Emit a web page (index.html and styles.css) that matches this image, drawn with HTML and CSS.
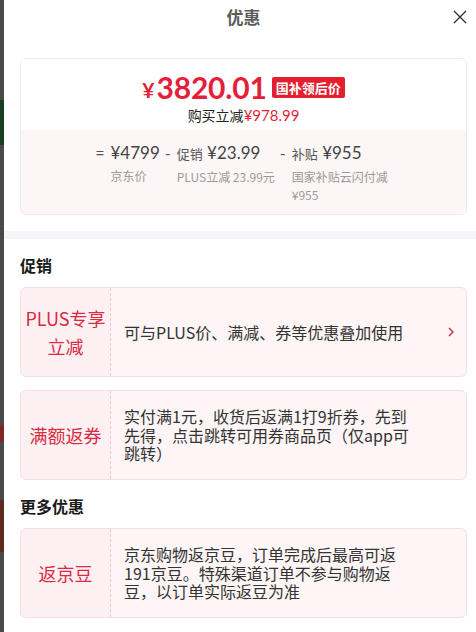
FILE: index.html
```html
<!DOCTYPE html>
<html lang="zh-CN">
<head>
<meta charset="utf-8">
<title>优惠</title>
<link rel="stylesheet" href="styles.css">
</head>
<body>
<div class="backdrop"></div>
<div class="panel">
  <header class="head">
    <span class="head-side"></span>
    <h1 class="title">优惠</h1>
    <span class="close" aria-label="关闭">
      <svg width="14" height="14" viewBox="0 0 14 14"><path d="M1 1 L13 13 M13 1 L1 13" stroke="#333" stroke-width="1.4" fill="none"/></svg>
    </span>
  </header>

  <section class="summary">
    <div class="summary-top">
      <div class="price-row">
        <span class="yen">¥</span><span class="price">3820.01</span><span class="badge">国补领后价</span>
      </div>
      <div class="save">购买立减<span class="save-num">¥978.99</span></div>
    </div>
    <div class="summary-bottom">
      <div class="calc">
        <span class="op">=</span>
        <div class="term">
          <div class="val">¥4799</div>
          <div class="lbl">京东价</div>
        </div>
      </div>
      <div class="calc">
        <span class="op">-</span>
        <div class="term">
          <div class="val"><span class="val-tag">促销</span> ¥23.99</div>
          <div class="lbl">PLUS立减 23.99元</div>
        </div>
      </div>
      <div class="calc">
        <span class="op">-</span>
        <div class="term term-narrow">
          <div class="val"><span class="val-tag">补贴</span> ¥955</div>
          <div class="lbl">国家补贴云闪付减 ¥955</div>
        </div>
      </div>
    </div>
  </section>

  <div class="band"></div>

  <section class="group">
    <h2 class="group-title">促销</h2>
    <div class="promo">
      <div class="promo-tag">PLUS专享<br>立减</div>
      <div class="promo-text">可与PLUS价、满减、券等优惠叠加使用</div>
      <div class="promo-more">
        <svg width="6" height="10" viewBox="0 0 6 10"><path d="M1 1 L5 5 L1 9" stroke="#c8334a" stroke-width="1.5" fill="none"/></svg>
      </div>
    </div>
    <div class="promo">
      <div class="promo-tag">满额返券</div>
      <div class="promo-text">实付满1元，收货后返满1打9折券，先到先得，点击跳转可用券商品页（仅app可跳转）</div>
      <div class="promo-more"></div>
    </div>
  </section>

  <section class="group">
    <h2 class="group-title">更多优惠</h2>
    <div class="promo">
      <div class="promo-tag">返京豆</div>
      <div class="promo-text">京东购物返京豆，订单完成后最高可返191京豆。特殊渠道订单不参与购物返豆，以订单实际返豆为准</div>
      <div class="promo-more"></div>
    </div>
  </section>
</div>
</body>
</html>
```

FILE: styles.css
```css
* {
  box-sizing: border-box;
}

html, body {
  margin: 0;
  padding: 0;
}

body {
  width: 476px;
  height: 632px;
  overflow: hidden;
  display: flex;
  background: #fff;
  font-family: "Noto Sans CJK SC", "Microsoft YaHei", sans-serif;
  color: #333;
}

.backdrop {
  flex: 0 0 4px;
  height: 632px;
  background: linear-gradient(to bottom,
    #4a4a4a 0, #4a4a4a 100px,
    #173f22 100px, #173f22 145px,
    #4a4a4a 145px, #4a4a4a 425px,
    #7a2a2a 425px, #7a2a2a 442px,
    #4a4a4a 442px, #4a4a4a 500px,
    #5e2a1c 500px, #5e2a1c 552px,
    #4a4a4a 552px);
}

.panel {
  flex: 0 0 479px;
  background: #fff;
}

/* header */
.head {
  display: grid;
  grid-template-columns: 1fr auto 1fr;
  align-items: center;
  height: 34px;
}

.title {
  margin: 0;
  font-size: 17px;
  font-weight: 700;
  color: #5c5c5c;
  line-height: 34px;
}

.close {
  justify-self: end;
  margin-right: 16px;
  display: flex;
  width: 14px;
  height: 14px;
}

/* summary card */
.summary {
  margin: 24px 16px 0;
  border: 1px solid #ececec;
  border-radius: 6px;
  overflow: hidden;
}

.summary-top {
  padding: 10px 0 5px;
  background: #fff;
}

.price-row {
  display: flex;
  justify-content: center;
  align-items: center;
  height: 36px;
  color: #e41f3a;
  font-family: Lato, "Noto Sans CJK SC", sans-serif;
}

.yen {
  font-size: 21px;
  font-weight: 700;
  margin-right: 2px;
  margin-top: 5px;
}

.price {
  font-size: 30px;
  font-weight: 700;
  line-height: 36px;
  letter-spacing: -0.2px;
}

.badge {
  margin-left: 5px;
  height: 21px;
  padding: 0 4px;
  background: #e4202e;
  color: #fff;
  font-size: 13px;
  font-weight: 700;
  line-height: 21px;
  border-radius: 2px;
  font-family: "Noto Sans CJK SC", sans-serif;
}

.save {
  text-align: center;
  font-size: 14px;
  line-height: 20px;
  color: #222;
}

.save-num {
  color: #e41f3a;
  font-family: Lato, "Noto Sans CJK SC", sans-serif;
  font-size: 15px;
}

.summary-bottom {
  display: flex;
  justify-content: center;
  gap: 5px;
  padding: 12px 0 10px;
  background: #fdf6f6;
}

.calc {
  display: flex;
  align-items: flex-start;
}

.op {
  font-size: 16px;
  line-height: 22px;
  color: #555;
  margin-right: 6px;
  font-family: Lato, sans-serif;
}

.term-narrow {
  max-width: 100px;
}

.val {
  font-family: Lato, "Noto Sans CJK SC", sans-serif;
  font-size: 17px;
  line-height: 22px;
  color: #444;
  white-space: nowrap;
}

.val-tag {
  font-family: "Noto Sans CJK SC", sans-serif;
  font-size: 13px;
  color: #555;
}

.lbl {
  margin-top: 3px;
  font-size: 12px;
  line-height: 18px;
  color: #9a9a9a;
}

/* separator */
.band {
  height: 8px;
  margin-top: 16px;
  background: #f5f6f9;
}

/* groups */
.group {
  padding: 0 16px;
}

.group-title {
  margin: 18px 0 14px;
  font-size: 16px;
  line-height: 16px;
  font-weight: 700;
  color: #1a1a1a;
}

.promo {
  display: grid;
  grid-template-columns: 90px 1fr 40px;
  min-height: 90px;
  border: 1px solid #f3dfe2;
  border-radius: 6px;
  background: #fdf5f6;
  overflow: hidden;
}

.promo + .promo {
  margin-top: 13px;
}

.promo-tag {
  display: flex;
  align-items: center;
  justify-content: center;
  text-align: center;
  background: #fcf0f2;
  border-right: 1px dashed #ebc9cf;
  color: #d92a43;
  font-size: 18px;
  line-height: 28px;
}

.promo-text {
  display: flex;
  align-items: center;
  padding: 16px 11px 16px 13px;
  font-size: 16px;
  line-height: 18.5px;
  color: #333;
}

.promo-more {
  display: flex;
  align-items: center;
  justify-content: flex-end;
  padding-right: 12px;
}
```
